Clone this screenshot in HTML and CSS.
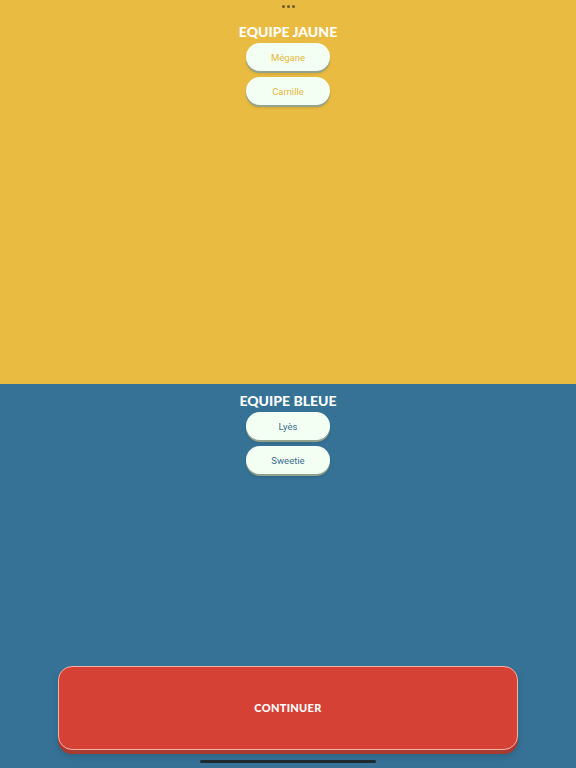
FILE: index.html
```html
<!DOCTYPE html>
<html lang="fr">
<head>
<meta charset="utf-8">
<link rel="stylesheet" href="styles.css">
</head>
<body>
<div class="screen">
  <section class="team team-yellow">
    <div class="dots"><span></span><span></span><span></span></div>
    <h2 class="team-title">EQUIPE JAUNE</h2>
    <div class="player player-yellow">Mégane</div>
    <div class="player player-yellow">Camille</div>
  </section>
  <section class="team team-blue">
    <h2 class="team-title">EQUIPE BLEUE</h2>
    <div class="player player-blue">Lyès</div>
    <div class="player player-blue">Sweetie</div>
    <div class="spacer"></div>
    <button class="continue">CONTINUER</button>
  </section>
  <div class="home-indicator"></div>
</div>
</body>
</html>
```
FILE: styles.css
```css
* { box-sizing: border-box; }
html, body { margin: 0; padding: 0; }
body { font-family: "Open Sans", "Liberation Sans", sans-serif; }
.screen {
  width: 576px;
  height: 768px;
  display: flex;
  flex-direction: column;
  position: relative;
  overflow: hidden;
}
.team {
  height: 384px;
  display: flex;
  flex-direction: column;
  align-items: center;
}
.team-yellow { background: #e9bc41; padding-top: 5px; }
.team-blue { background: #357296; padding-top: 9px; }
.dots {
  display: flex;
  gap: 2px;
  height: 4px;
  margin-bottom: 15px;
}
.dots span {
  width: 3px;
  height: 3px;
  border-radius: 50%;
  background: #6b5a2a;
}
.team-title {
  margin: 0 0 3px;
  font-family: Lato, "DejaVu Sans", sans-serif;
  font-weight: 900;
  font-size: 14px;
  letter-spacing: 0;
  line-height: 16px;
  color: #ffffff;
}
.player {
  width: 84px;
  height: 28px;
  border-radius: 14px;
  background: #f4fff4;
  box-shadow: 0 2px 0 #93a28c, 0 3px 3px rgba(0,0,0,0.12);
  display: flex;
  align-items: center;
  justify-content: center;
  font-family: Roboto, "Liberation Sans", sans-serif;
  font-size: 9.5px;
  margin-bottom: 6px;
}
.player-yellow { color: #e5b83c; }
.player-blue { color: #3a6e8e; }
.spacer { flex: 1; }
.continue {
  width: 460px;
  height: 84px;
  margin-bottom: 18px;
  border: 1px solid #f0b3aa;
  border-radius: 14px;
  background: #d64135;
  box-shadow: 0 4px 0 #a83a32, 0 6px 6px rgba(0,0,0,0.15);
  color: #ffffff;
  font-family: Lato, "DejaVu Sans", sans-serif;
  font-weight: 900;
  font-size: 11px;
  letter-spacing: 0.3px;
  padding-bottom: 2px;
}
.home-indicator {
  position: absolute;
  left: 200px;
  bottom: 5px;
  width: 176px;
  height: 3px;
  border-radius: 2px;
  background: #1f2a30;
}
```
